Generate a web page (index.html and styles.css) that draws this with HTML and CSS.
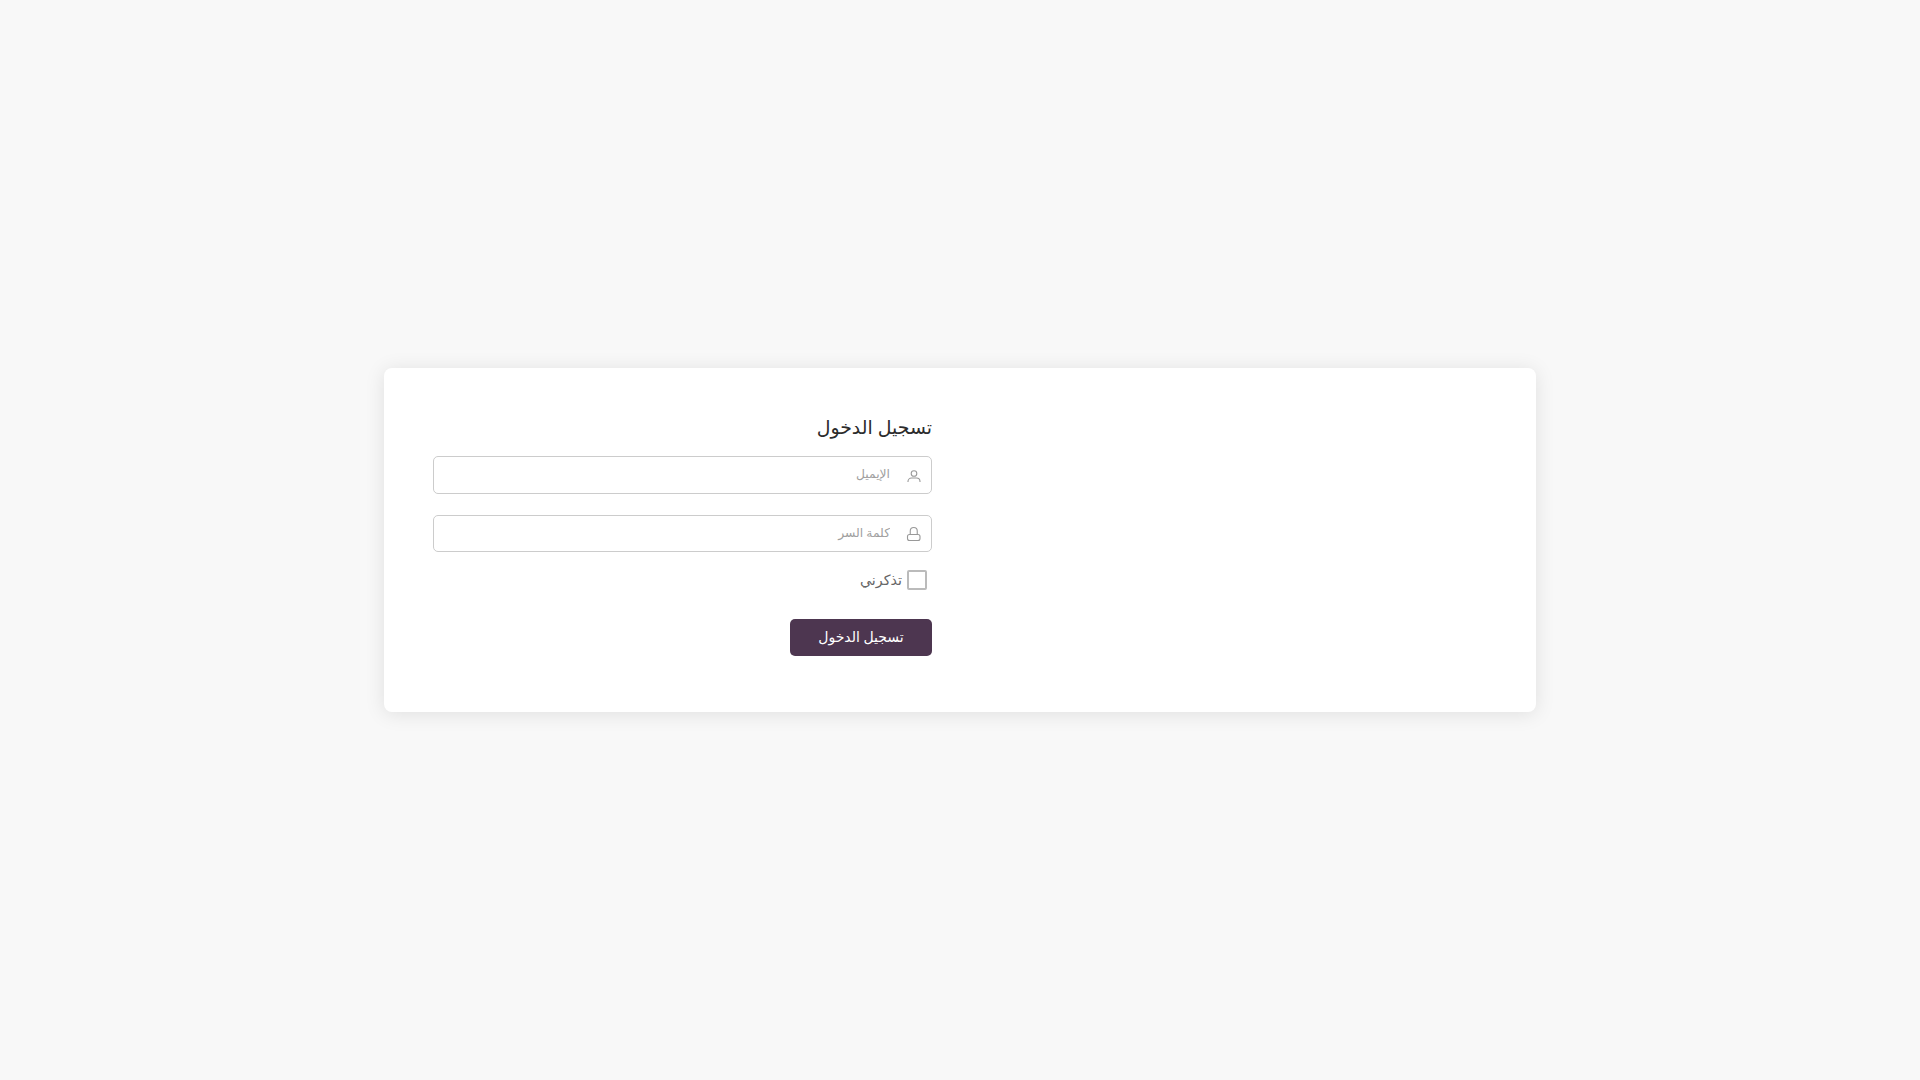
FILE: index.html
```html
<!DOCTYPE html>
<html lang="ar" dir="rtl">
<head>
  <meta charset="utf-8">
  <title>تسجيل الدخول</title>
  <link rel="stylesheet" href="styles.css">
</head>
<body>
  <div class="login-card">
    <form class="login-form">
      <h1 class="login-title">تسجيل الدخول</h1>
      <div class="field">
        <svg class="field-icon" viewBox="0 0 16 16"><circle cx="8" cy="5.5" r="2.8"/><path d="M2 14v-.5A3.5 3.5 0 0 1 5.5 10h5a3.5 3.5 0 0 1 3.5 3.5v.5"/></svg>
        <input class="field-input" type="text" placeholder="الإيميل">
      </div>
      <div class="field">
        <svg class="field-icon" viewBox="0 0 16 16"><rect x="1.5" y="8.5" width="12.5" height="6" rx="2"/><path d="M4.25 8.5V5a3.5 3.5 0 0 1 7 0v3.5"/></svg>
        <input class="field-input" type="password" placeholder="كلمة السر">
      </div>
      <label class="remember">
        <span class="remember-box"></span>
        <span class="remember-text">تذكرني</span>
      </label>
      <button class="login-btn" type="button">تسجيل الدخول</button>
    </form>
  </div>
</body>
</html>
```
FILE: styles.css
```css
* {
  box-sizing: border-box;
}

html, body {
  height: 100%;
}

body {
  margin: 0;
  background: #f8f8f8;
  font-family: "Noto Sans", "DejaVu Sans", sans-serif;
  display: flex;
  align-items: center;
  justify-content: center;
}

.login-card {
  width: 1152px;
  height: 344px;
  padding: 44px 49px;
  background: #fff;
  border-radius: 8px;
  box-shadow: 0 2px 20px rgba(0, 0, 0, 0.1);
}

.login-form {
  width: 499px;
  margin-right: auto;
}

.login-title {
  margin: 0 0 14px;
  font-size: 18.9px;
  font-weight: 400;
  line-height: 30px;
  color: #2b2b2b;
}

.field {
  display: flex;
  align-items: center;
  height: 37.5px;
  padding-right: 9px;
  border: 1px solid #ccc;
  border-radius: 5px;
}

.field + .field {
  margin-top: 21px;
}

.field-icon {
  width: 16px;
  height: 16px;
  margin-top: 2px;
  flex: none;
  fill: none;
  stroke: #999;
  stroke-width: 1.1;
}

.field-input {
  flex: 1;
  min-width: 0;
  height: 100%;
  padding: 0 16px 2px;
  border: none;
  outline: none;
  background: transparent;
  font-family: inherit;
  font-size: 12.3px;
}

.field-input::placeholder {
  color: #a0a0a0;
}

.remember {
  display: flex;
  align-items: center;
  gap: 5px;
  height: 20px;
  margin-top: 18px;
  padding-right: 5px;
  font-size: 14.3px;
  color: #666;
}

.remember-box {
  width: 20px;
  height: 20px;
  border: 2px solid #bbb;
  border-radius: 2px;
}

.remember-text {
  padding-bottom: 2px;
}

.login-btn {
  display: block;
  width: 142px;
  height: 37px;
  margin-top: 29px;
  padding: 0 0 2px;
  border: none;
  border-radius: 5px;
  background: #4d3650;
  color: #fff;
  font-family: inherit;
  font-size: 14px;
}
```
